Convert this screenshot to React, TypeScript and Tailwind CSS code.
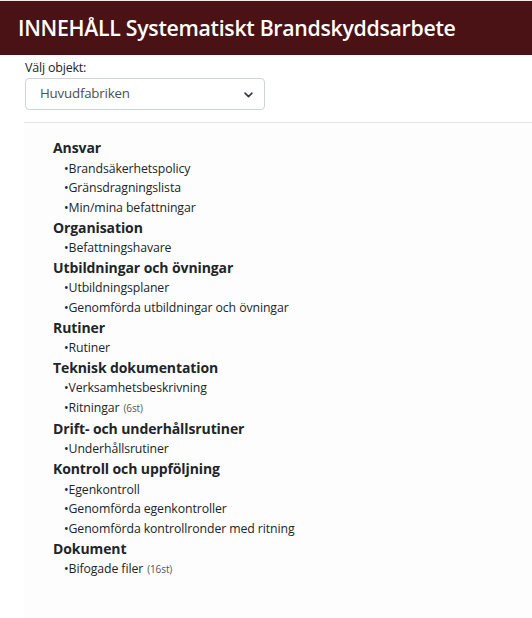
const sections: { title: string; items: { text: string; count?: string }[] }[] = [
  {
    title: "Ansvar",
    items: [{ text: "Brandsäkerhetspolicy" }, { text: "Gränsdragningslista" }, { text: "Min/mina befattningar" }],
  },
  { title: "Organisation", items: [{ text: "Befattningshavare" }] },
  {
    title: "Utbildningar och övningar",
    items: [{ text: "Utbildningsplaner" }, { text: "Genomförda utbildningar och övningar" }],
  },
  { title: "Rutiner", items: [{ text: "Rutiner" }] },
  {
    title: "Teknisk dokumentation",
    items: [{ text: "Verksamhetsbeskrivning" }, { text: "Ritningar", count: "(6st)" }],
  },
  { title: "Drift- och underhållsrutiner", items: [{ text: "Underhållsrutiner" }] },
  {
    title: "Kontroll och uppföljning",
    items: [
      { text: "Egenkontroll" },
      { text: "Genomförda egenkontroller" },
      { text: "Genomförda kontrollronder med ritning" },
    ],
  },
  { title: "Dokument", items: [{ text: "Bifogade filer", count: "(16st)" }] },
]

export default function App() {
  return (
    <div className="w-[532px] h-[618px] bg-white text-[#212529] font-['Open_Sans',sans-serif] overflow-hidden">
      <div className="h-[55px] bg-[#4a1214] border-t border-[#f3eaea] flex items-center pl-[18px]">
        <h1 className="text-white text-[21.3px] font-semibold tracking-[-0.3px] leading-none">
          INNEHÅLL Systematiskt Brandskyddsarbete
        </h1>
      </div>

      <div className="pl-[25px] pt-[4px]">
        <label className="block text-[12.5px] leading-[18px] tracking-[-0.2px]">Välj objekt:</label>
        <div className="mt-[1px] w-[240px] h-[32px] border border-[#ced4da] rounded-[4px] flex items-center justify-between pl-[14px] pr-[10px] text-[13.3px] text-[#495057] tracking-[-0.2px]">
          <span>Huvudfabriken</span>
          <svg width="11" height="11" viewBox="0 0 16 16" fill="none" stroke="#343a40" strokeWidth="2.4" strokeLinecap="round" strokeLinejoin="round">
            <path d="M3 6l5 5 5-5" />
          </svg>
        </div>
      </div>

      <div className="ml-[24px] mt-[12px] border-t border-[#e4e4e4] bg-[#fdfdfd] h-full">
        <div className="pl-[29px] pt-[15px]">
          {sections.map((s) => (
            <div key={s.title}>
              <div className="text-[14px] font-bold leading-[20.5px] tracking-[-0.1px]">{s.title}</div>
              {s.items.map((it) => (
                <div key={it.text} className="pl-[11px] text-[12.3px] leading-[19.7px] tracking-[-0.1px]">
                  •{it.text}
                  {it.count && <span className="text-[10px] text-[#555] ml-[4px]">{it.count}</span>}
                </div>
              ))}
            </div>
          ))}
        </div>
      </div>
    </div>
  )
}
